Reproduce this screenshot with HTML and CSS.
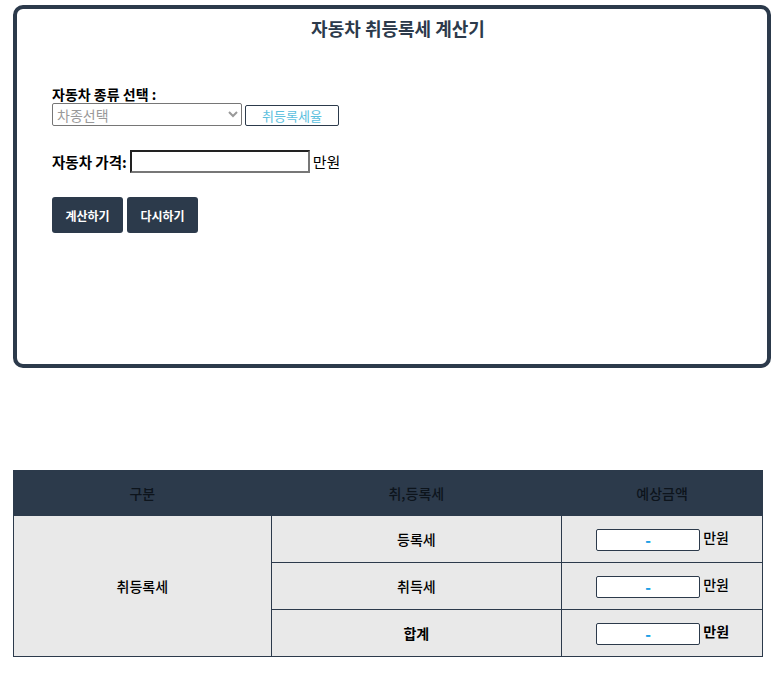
FILE: index.html
```html
<!DOCTYPE html>
<html>
	<head>
		<title>자동차 취등록세 계산기</title>
		<meta name="viewport" content="width=device-width, initial-scale=1">
		<link rel="stylesheet" href="styles.css">
	</head>
	<body>
		<main class="calc">
			<h1>자동차 취등록세 계산기</h1>
			<form id="taxform">
				<div class="field">
					<label for="carType">자동차 종류 선택 :</label>
					<div class="row">
						<select id="carType" name="carType">
							<option value="">차종선택</option>
							<option value="car">비영업용 승용차</option>
							<option value="light">경차</option>
						</select>
						<button type="button" class="rate">취등록세율</button>
					</div>
				</div>
				<div class="field price">
					<label for="price">자동차 가격:</label>
					<input type="text" id="price" name="price">
					<span>만원</span>
				</div>
				<div class="actions">
					<button type="submit" class="btn">계산하기</button>
					<button type="reset" class="btn">다시하기</button>
				</div>
			</form>
		</main>
		<table class="result">
			<colgroup>
				<col class="c1">
				<col class="c2">
				<col class="c3">
			</colgroup>
			<thead>
				<tr>
					<th>구분</th>
					<th>취,등록세</th>
					<th>예상금액</th>
				</tr>
			</thead>
			<tbody>
				<tr>
					<td rowspan="3">취등록세</td>
					<td>등록세</td>
					<td class="amount"><input type="text" class="out" value="-" readonly> 만원</td>
				</tr>
				<tr>
					<td>취득세</td>
					<td class="amount"><input type="text" class="out" value="-" readonly> 만원</td>
				</tr>
				<tr class="total">
					<td>합계</td>
					<td class="amount"><input type="text" class="out" value="-" readonly> 만원</td>
				</tr>
			</tbody>
		</table>
	</body>
</html>
```

FILE: styles.css
```css
html, body {
	margin: 0;
	padding: 0;
	background: #fff;
	font-family: "Noto Sans CJK KR", "Noto Sans", sans-serif;
	color: #000;
}
.calc {
	margin: 5px 12px 0 13px;
	border: 4px solid #2c3a4b;
	border-radius: 10px;
	box-sizing: border-box;
	height: 363px;
}
h1 {
	margin: 0;
	padding: 5px 0 0 12px;
	font-size: 18px;
	line-height: 28px;
	text-align: center;
	color: #2c3a4b;
}
form {
	padding: 44px 0 0 35px;
}
.field label {
	display: block;
	font-size: 14px;
	font-weight: bold;
	line-height: 17px;
}
.row {
	display: flex;
	align-items: flex-end;
	gap: 3px;
}
select {
	width: 190px;
	height: 23px;
	padding: 0;
	font-family: inherit;
	font-size: 14px;
	color: #999;
	border: 1px solid #767676;
	border-radius: 2px;
	background: #fff;
}
.rate {
	width: 94px;
	height: 21px;
	padding: 0;
	font-family: inherit;
	font-size: 13px;
	color: #5bc0de;
	background: #fff;
	border: 1px solid #2c3a4b;
	border-radius: 2px;
}
.price {
	display: flex;
	align-items: center;
	margin-top: 24px;
	gap: 3px;
}
.price label {
	display: inline;
	font-size: 14.5px;
}
.price input {
	width: 180px;
	height: 23px;
	box-sizing: border-box;
	border: 2px solid;
	border-color: #222 #777 #777 #222;
	padding: 0 2px;
}
.price span {
	font-size: 15px;
}
.actions {
	display: flex;
	gap: 4px;
	margin-top: 24px;
}
.btn {
	width: 71px;
	height: 36px;
	padding: 0;
	font-family: inherit;
	font-size: 12px;
	font-weight: bold;
	color: #fff;
	background: #2c3a4b;
	border: none;
	border-radius: 3px;
}
.result {
	margin: 102px 0 0 13px;
	width: 750px;
	border-collapse: collapse;
	font-size: 14px;
	text-align: center;
}
.c1 { width: 258px; }
.c2 { width: 291px; }
.c3 { width: 201px; }
.result th {
	height: 44px;
	padding: 0;
	background: #2c3a4b;
	color: #0d141c;
	font-weight: 500;
	border: 1px solid #2c3a4b;
}
.result td {
	height: 46px;
	padding: 0;
	background: #e9e9e9;
	border: 1px solid #2c3a4b;
	font-weight: 500;
}
.result .amount {
	padding-left: 34px;
	text-align: left;
}
.out {
	width: 104px;
	height: 22px;
	box-sizing: border-box;
	border: 1px solid #2c3a4b;
	border-radius: 2px;
	text-align: center;
	font-family: inherit;
	font-weight: 900;
	font-size: 15px;
	color: #1ea1e6;
	vertical-align: middle;
}
.result .total td {
	font-weight: bold;
}
```
